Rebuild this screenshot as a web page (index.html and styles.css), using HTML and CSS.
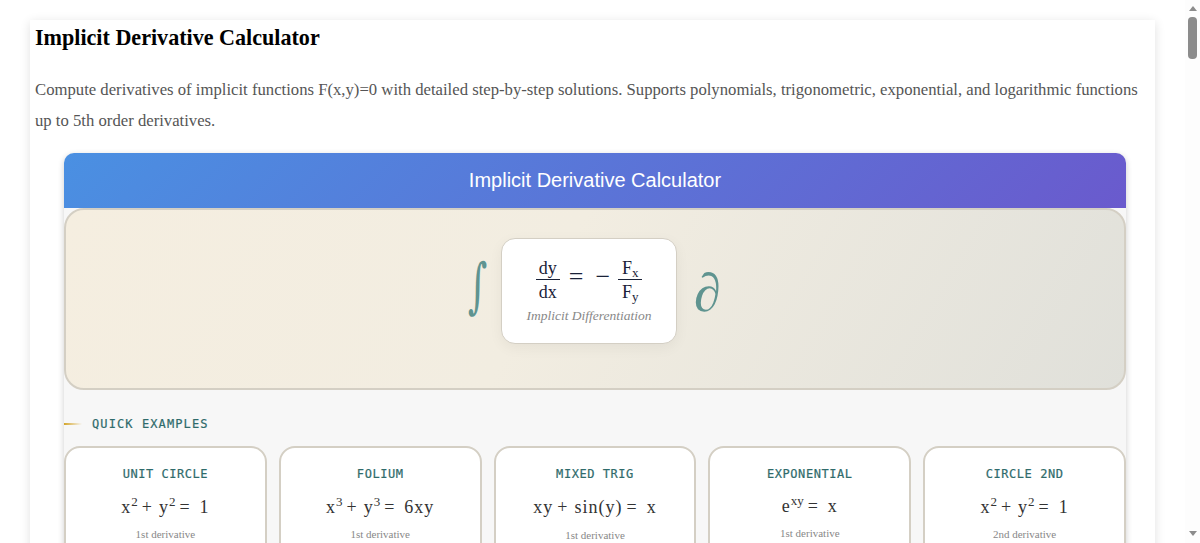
FILE: index.html
```html
<!DOCTYPE html>
<html lang="en">
<head>
  <meta charset="UTF-8" />
  <meta name="viewport" content="width=device-width,initial-scale=1" />
  <title>Implicit Derivative Calculator</title>
  <link rel="stylesheet" href="styles.css">
</head>
<body>
  <main class="page">
    <h1 class="page-title">Implicit Derivative Calculator</h1>
    <p class="intro">Compute derivatives of implicit functions F(x,y)=0 with detailed step-by-step solutions. Supports polynomials, trigonometric, exponential, and logarithmic functions up to 5th order derivatives.</p>

    <section class="calc">
      <header class="calc-head">Implicit Derivative Calculator</header>

      <div class="hero">
        <span class="hero-sym">∫</span>
        <div class="formula-card">
          <div class="formula">
            <span class="frac"><span class="num">dy</span><span class="den">dx</span></span>
            <span class="eq">=</span>
            <span class="eq minus">−</span>
            <span class="frac"><span class="num">F<sub>x</sub></span><span class="den">F<sub>y</sub></span></span>
          </div>
          <div class="formula-note">Implicit Differentiation</div>
        </div>
        <span class="hero-sym hero-sym-partial">∂</span>
      </div>

      <h2 class="section-label">Quick Examples</h2>
      <div class="examples">
        <div class="example">
          <div class="example-name">Unit Circle</div>
          <div class="example-math">x<sup>2</sup><span class="op">+</span>y<sup>2</sup><span class="op op-eq">=</span>1</div>
          <div class="example-order">1st derivative</div>
        </div>
        <div class="example">
          <div class="example-name">Folium</div>
          <div class="example-math">x<sup>3</sup><span class="op">+</span>y<sup>3</sup><span class="op op-eq">=</span>6xy</div>
          <div class="example-order">1st derivative</div>
        </div>
        <div class="example">
          <div class="example-name">Mixed Trig</div>
          <div class="example-math example-math-tall">xy<span class="op">+</span>sin(y)<span class="op op-eq">=</span>x</div>
          <div class="example-order">1st derivative</div>
        </div>
        <div class="example">
          <div class="example-name">Exponential</div>
          <div class="example-math example-math-short">e<sup>xy</sup><span class="op op-eq">=</span>x</div>
          <div class="example-order">1st derivative</div>
        </div>
        <div class="example">
          <div class="example-name">Circle 2nd</div>
          <div class="example-math">x<sup>2</sup><span class="op">+</span>y<sup>2</sup><span class="op op-eq">=</span>1</div>
          <div class="example-order">2nd derivative</div>
        </div>
      </div>
    </section>
  </main>

  <div class="scrollbar" aria-hidden="true">
    <span class="scroll-arrow scroll-arrow-up"></span>
    <span class="scroll-thumb"></span>
    <span class="scroll-arrow scroll-arrow-down"></span>
  </div>
</body>
</html>
```

FILE: styles.css
```css
:root {
  --line: #d4cfc4;
  --teal: #2f6b6b;
  --sym: #5f9490;
  --ink: #1a2238;
  --bar: #8c8c8c;
  --serif: "Liberation Serif", serif;
  --mono: "DejaVu Sans Mono", monospace;
}
* { box-sizing:border-box; margin:0; padding:0 }
body { background:#fff; font-family:var(--serif); padding-top:20px }

.page {
  width:1125px; margin:0 30px; padding:0 5px;
  background:#fff; box-shadow:0 2px 10px rgba(0,0,0,0.12);
}
.page-title { font-size:22.1px; line-height:36px; font-weight:bold; color:#000 }
.intro { margin-top:18px; font-size:16.7px; line-height:31px; color:#555 }

.calc {
  margin:17px 24px 0 29px; background:#f7f7f7;
  border-radius:10px 10px 0 0; box-shadow:0 2px 6px rgba(0,0,0,0.2);
}
.calc-head {
  height:55px; display:flex; align-items:center; justify-content:center;
  font-family:"Liberation Sans",sans-serif; font-size:20px; color:#fff;
  background:linear-gradient(135deg,#4a90e2,#6a5acd);
  border-radius:10px 10px 0 0;
}

.hero {
  height:182px; padding:28px 0 0 388px; display:flex; align-items:flex-start;
  border:2px solid var(--line); border-radius:20px;
  background:linear-gradient(120deg,#f5eee0,#f2ede1 45%,#e0e0da);
}
.hero-sym {
  width:47px; font-family:"DejaVu Serif",serif; font-size:60px; line-height:94px; color:var(--sym);
  text-align:center; transform:scaleX(0.62);
}
.hero-sym-partial {
  margin:8px 0 0 17px; font-family:var(--serif); font-size:54px; font-style:italic;
  text-align:left; transform:none;
}
.formula-card {
  flex:none; width:176px; height:106px; padding-top:19px; background:#fff;
  border:1px solid var(--line); border-radius:14px;
  box-shadow:0 4px 14px rgba(0,0,0,0.05);
  text-align:center;
}
.formula { display:flex; justify-content:center; align-items:center; font-size:18px; color:var(--ink) }
.frac { display:flex; flex-direction:column; width:24px; align-items:center }
.num { width:100%; text-align:center; border-bottom:1px solid var(--ink); line-height:21px }
.den { line-height:24px }
.formula sub { font-size:13px; vertical-align:-3px; line-height:0 }
.eq { margin:0 9px 8px; font-size:26px; line-height:24px; font-weight:normal }
.minus { margin:0 8px 8px 3px }
.formula-note { margin-top:4px; font-size:13.5px; font-style:italic; color:#888 }

.section-label {
  margin-top:25px; display:flex; align-items:center; gap:10px;
  font-family:var(--mono); font-size:12px; line-height:18px; font-weight:normal;
  letter-spacing:1.1px; text-transform:uppercase; color:var(--teal);
  -webkit-text-stroke:0.2px var(--teal);
}
.section-label::before {
  content:""; width:18px; height:2px;
  background:linear-gradient(90deg,#d4a52a,rgba(212,165,42,0));
}
.examples { margin-top:13px; display:grid; grid-template-columns:repeat(5,1fr); gap:12px }
.example {
  height:140px; padding-top:18px; background:#fff; text-align:center;
  border:2px solid var(--line); border-radius:16px;
}
.example-name {
  font-family:var(--mono); font-size:12px; line-height:16px;
  letter-spacing:0.55px; text-transform:uppercase; color:var(--teal);
  -webkit-text-stroke:0.2px var(--teal);
}
.example-math { margin-top:12px; font-size:18px; line-height:26px; letter-spacing:1px; color:#333 }
.example-math-tall { line-height:27px }
.example-math-short { line-height:25px }
.example-math sup { font-size:13px; line-height:0; vertical-align:7px; letter-spacing:0 }
.op { margin:0 6px 0 4px }
.op-eq { margin-right:9px }
.example-order { margin-top:6px; font-size:11px; line-height:16px; color:#888 }

/* the window's scrollbar, drawn because the capture leaves it out */
.scrollbar {
  position:fixed; top:0; right:0; bottom:0; width:15px; background:#fdfdfd;
  display:flex; flex-direction:column; align-items:center;
}
.scroll-arrow { width:0; height:0; border:solid transparent; border-width:0 4.5px }
.scroll-arrow-up { margin-top:6px; border-bottom:5px solid var(--bar) }
.scroll-arrow-down { margin-top:auto; margin-bottom:7px; border-top:5px solid var(--bar) }
.scroll-thumb { margin-top:6px; width:9px; height:42px; background:var(--bar); border-radius:4px }
```
